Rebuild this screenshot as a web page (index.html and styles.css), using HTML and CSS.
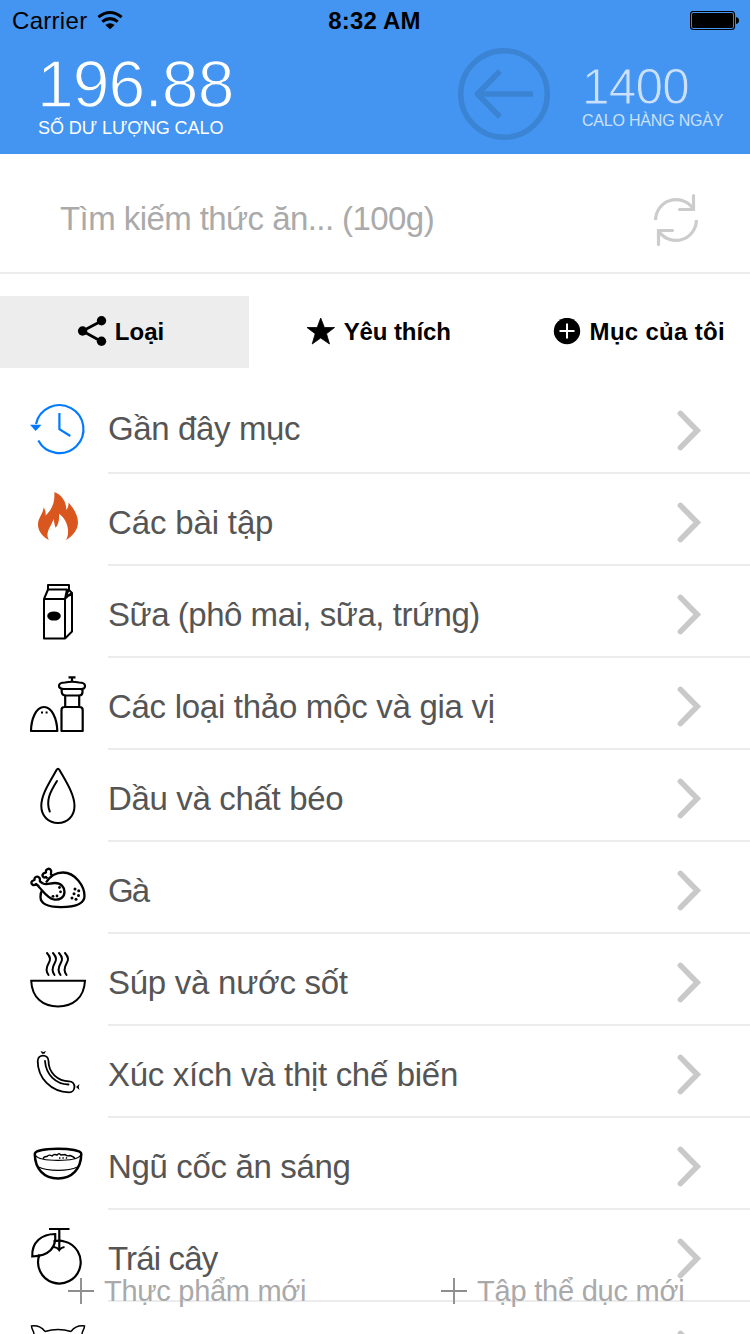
FILE: index.html
```
<!DOCTYPE html>
<html lang="vi">
<head>
<meta charset="utf-8">
<title>Calo</title>
<link rel="stylesheet" href="styles.css">
</head>
<body>
<svg class="defs" width="0" height="0"><defs><symbol id="chev" viewBox="0 0 30 46"><path d="M6.400 5.400L23.200 22.500L6.400 39.600" fill="none" stroke="#c9c9c9" stroke-width="5.600" stroke-linecap="round" stroke-linejoin="miter"/></symbol></defs></svg>
<div class="screen">
  <header class="header">
    <div class="status">
      <div class="carrier"><span class="carrier-name">Carrier</span>
        <svg class="wifi" width="26" height="20" viewBox="98 10 26 20"><g fill="none" stroke="#000" stroke-width="3"><path d="M99.400 17.200Q111 7.800 122.600 17.200"/><path d="M103.200 21.700Q111 15.500 118.800 21.700"/></g><path d="M106.300 25Q111 21.500 115.700 25L111 29.300Z"/></svg>
      </div>
      <span class="time">8:32 AM</span>
      <svg class="battery" width="50" height="20" viewBox="690 11 50 20"><rect x="690.500" y="11.500" width="44" height="18" rx="3" fill="none" stroke="#000" stroke-width="1.200"/><rect x="692" y="13" width="41" height="15" rx="1.500"/><path d="M736 17q3 .5 3 3.500t-3 3.500z"/></svg>
    </div>
    <div class="summary">
      <div class="balance"><div class="balance-num">196.88</div><div class="balance-label">SỐ DƯ LƯỢNG CALO</div></div>
      <svg class="back" width="94" height="94" viewBox="457 47 94 94" fill="none" stroke="#3b83d3"><circle cx="504" cy="94" r="43.300" stroke-width="5.400"/><path d="M533 94H478M500 71L477.500 94L500 117" stroke-width="5.600" stroke-linejoin="round"/></svg>
      <div class="daily"><div class="daily-num">1400</div><div class="daily-label">CALO HÀNG NGÀY</div></div>
    </div>
  </header>
  <div class="search">
    <span class="search-text">Tìm kiếm thức ăn... (100g)</span>
    <svg width="50" height="56" viewBox="651 192 50 56" fill="none" stroke="#ccc" stroke-width="3.200"><path d="M655.600 220A20.500 20.500 0 0 1 693 208.500M696.400 220A20.500 20.500 0 0 1 659 231.500"/><path d="M693.500 195.500V209.500H679.500M658.500 244.500V230.500H672.500" stroke-linecap="round"/></svg>
  </div>
  <nav class="tabs">
    <div class="tab tab-active"><svg width="30" height="32" viewBox="77 316 30 32"><path d="M101.500 321L82.500 331L101.500 341.500" fill="none" stroke="#000" stroke-width="2.800"/><circle cx="101.500" cy="320.700" r="4.700"/><circle cx="82.600" cy="331" r="4.700"/><circle cx="101.500" cy="341.300" r="4.700"/></svg><span class="t-cat">Loại</span></div>
    <div class="tab tab-fav"><svg width="30" height="30" viewBox="306 317 30 30"><path d="M320.700 318L324.400 327.500L334.600 327.500L326.500 333.700L329.500 344L320.700 338L312.200 344L315.200 333.700L307 327.500L317.200 327.500Z" stroke="#000" stroke-linejoin="round" stroke-width=".8"/></svg><span class="t-fav">Yêu thích</span></div>
    <div class="tab tab-own"><svg width="28" height="28" viewBox="552 318 28 28"><circle cx="566" cy="331" r="13.200"/><path d="M558.500 331H573.500M566 323.500V338.500" stroke="#fff" stroke-width="2"/></svg><span class="t-own">Mục của tôi</span></div>
  </nav>
  <main class="list">
    <div class="row first"><svg class="icon" viewBox="28 382 60 90"><g fill="none" stroke="#007aff" stroke-width="2.200"><path d="M36 424A24 24 0 1 1 38.300 440.500"/><path d="M59.400 413V429.200L70.300 436"/></g><path d="M30 424.800H41.500L35.700 431Z" fill="#007aff"/></svg><div class="cell"><span class="l1">Gần đây mục</span><svg class="chev"><use href="#chev"/></svg></div></div>
    <div class="row"><svg class="icon" viewBox="28 474 60 90"><path fill="#d9571f" d="M54.300 492C62 495 66.500 502 66.300 510C68 508 68.700 505.500 68.500 502.500C72.500 507 78 514.500 78 522.500C78 529.500 72.500 536.500 66 540C71 531 66.500 518.500 59 513.700C59.500 519 58.500 525.500 55.600 527.800C54.500 525 54.200 522 53.700 519C51 526.500 44.500 533 49 540C42.500 537 37.800 530.500 38 524C38.200 518 43.500 513 43.500 507.500C45 509 46 512 45.600 515.500C53 508.500 55 501 54.300 492Z"/></svg><div class="cell"><span class="l2">Các bài tập</span><svg class="chev"><use href="#chev"/></svg></div></div>
    <div class="row"><svg class="icon" viewBox="28 566 60 90" fill="none" stroke="#000" stroke-width="2" stroke-linejoin="round"><path d="M44 599H65V638.500H44ZM44 599L48 589.500H67L65 599M48 589.500V585H69V590L72 593V631.500L65 638.500M68.500 590L64.800 599L69.500 594.500L72 593M67 596L71.500 594.800"/><ellipse cx="54" cy="616" rx="5.800" ry="3.600" fill="#000"/></svg><div class="cell"><span class="l3">Sữa (phô mai, sữa, trứng)</span><svg class="chev"><use href="#chev"/></svg></div></div>
    <div class="row"><svg class="icon" viewBox="28 658 60 90" fill="none" stroke="#000" stroke-width="2.200" stroke-linejoin="round"><path d="M31 731H57.300C57 719 52 707 44 707S31.200 719 31 731ZM61.500 731V710Q61.500 707 64.500 707H79.500Q82.700 707 82.700 710V731ZM65.200 696V707M79.200 696V707M68.500 677.300H75.500M72 677.300V682"/><path d="M65 682.500Q72 681 79 682.500Q85 682.500 85 686T80 689H64Q59 689 59 685.800T65 682.500ZM61.700 689.500V692Q62 695.500 66 695.500H79Q82.500 695.500 82.500 692V689.500"/><path d="M41 712.500H43M45.600 712.500H47.600" stroke-width="1.800"/></svg><div class="cell"><span class="l4">Các loại thảo mộc và gia vị</span><svg class="chev"><use href="#chev"/></svg></div></div>
    <div class="row"><svg class="icon" viewBox="28 750 60 90" fill="none" stroke="#000" stroke-width="2" stroke-linecap="round"><path d="M56.500 770Q58 767.500 59.500 770C65 780 74.500 794 74.500 806C74.500 816 67.500 823 58 823S41.300 816 41.300 806C41.300 794 50 782 56.500 770Z"/><path d="M57 781C50 792 45.500 801 49.800 811.500"/></svg><div class="cell"><span class="l5">Dầu và chất béo</span><svg class="chev"><use href="#chev"/></svg></div></div>
    <div class="row"><svg class="icon" viewBox="28 842 60 90"><g fill="none" stroke="#000" stroke-width="2.300" stroke-linejoin="round"><path d="M46 882.500C50 876 56 872.500 63 872.500C75 872.500 84.500 886 84.500 896C84.500 904 76 907 61 907.200C47 907 40.500 904 40.500 897C40.500 893.500 40.800 892 42.300 890"/><path d="M43 883.500C47 885.500 50 883 55 883C61 883 64.500 887 64.500 892C64.500 897 60 900.500 54 899.500C47 898 44 892 38.500 886.500"/><path d="M39 886.500L36 884C34 886.500 31 884.500 31.500 882C32 880 34 880.500 34.500 880C34 876.500 38 875.500 39.500 878C40.500 879.500 39.500 880.500 40 881.500L43 883.500M47.500 878.500L46 877C44 878.500 41.500 876 43 874C44 872.500 45.500 873 46 872.500C45 869.500 49 867.500 50.800 870C52 871.500 50.500 873.500 51 874.500L53 876"/></g><g><circle cx="59.500" cy="887.500" r="1.400"/><circle cx="60.500" cy="891.800" r="1.400"/><circle cx="53" cy="896.300" r="1.400"/><circle cx="57" cy="896" r="1.400"/><circle cx="75" cy="889" r="1.500"/><circle cx="78.700" cy="890.800" r="1.500"/><circle cx="74" cy="893.800" r="1.500"/><circle cx="78.500" cy="895.500" r="1.500"/><circle cx="72" cy="898" r="1.500"/><circle cx="76" cy="899.200" r="1.500"/></g></svg><div class="cell"><span class="l6">Gà</span><svg class="chev"><use href="#chev"/></svg></div></div>
    <div class="row"><svg class="icon" viewBox="28 934 60 90" fill="none" stroke="#000" stroke-width="2"><path d="M31.200 980.700H85C84 998 73 1006.500 58 1006.500S32 998 31.200 980.700Z"/><path stroke-linecap="round" d="M47 953C51 957.500 50.500 960 48.500 963.500S45.500 971 48.500 975M53 953C57 957.500 56.500 960 54.500 963.500S51.500 971 54.500 975M59 953C63 957.500 62.500 960 60.500 963.500S57.500 971 60.500 975M65 953C69 957.500 68.500 960 66.500 963.500S63.500 971 66.500 975"/></svg><div class="cell"><span class="l7">Súp và nước sốt</span><svg class="chev"><use href="#chev"/></svg></div></div>
    <div class="row"><svg class="icon" viewBox="28 1026 60 90"><g fill="none" stroke="#000" stroke-width="1.800" stroke-linecap="round"><path d="M37.700 1061C37.700 1053.500 48.500 1054 48.500 1061C48.500 1073 58 1081 69 1081.300C76.500 1081.600 76 1092.300 69 1092.300C51 1092 37.700 1078 37.700 1061Z"/><path d="M45 1061C46 1075 56 1084 68.500 1084.500"/></g><path d="M40.500 1051L43.300 1052L46 1051L44.500 1053.700H42ZM79.500 1084L78.700 1087L79.500 1090L76 1087Z"/></svg><div class="cell"><span class="l8">Xúc xích và thịt chế biến</span><svg class="chev"><use href="#chev"/></svg></div></div>
    <div class="row"><svg class="icon" viewBox="28 1118 60 90" fill="none" stroke="#000"><path stroke-width="2.500" d="M34.800 1154C34.800 1147 81.300 1147 81.300 1154C81 1169 72 1178.500 58 1178.500S35 1169 34.800 1154Z"/><path stroke-width="1.300" d="M35.500 1155.500C40 1162 76 1162 80.500 1155.500M38.500 1167C48 1171.500 68 1171.500 77.500 1167"/><path stroke-width="1.400" d="M43 1159Q44 1156 47 1156.500Q49 1154 52 1156Q54 1153.500 57 1155Q59 1152.500 61 1155L65 1154.500Q67 1156.500 70 1155.500Q74 1156.500 75 1159"/><path stroke-width="1.400" stroke-dasharray="1.400 2" d="M59 1158H68"/></svg><div class="cell"><span class="l9">Ngũ cốc ăn sáng</span><svg class="chev"><use href="#chev"/></svg></div></div>
    <div class="row"><svg class="icon" viewBox="28 1210 60 90" fill="none" stroke="#000" stroke-width="2.200"><path d="M53.500 1241.500C57 1240.500 61 1240.500 64.500 1241.500A21.300 21.300 0 1 1 39.500 1254.500"/><path d="M55.200 1234C56.500 1248 49 1256 32.300 1256.500C31.500 1242 42 1234 55.200 1234ZM49 1229H69.500M59.300 1229V1249"/><path d="M54 1247Q57.500 1247.500 59.300 1250Q61 1247.500 64.500 1247"/></svg><div class="cell"><span class="l10">Trái cây</span><svg class="chev"><use href="#chev"/></svg></div></div>
    <div class="row"><svg class="icon" viewBox="28 1302 60 90" fill="none" stroke="#000" stroke-width="1.500"><path d="M34 1334C34 1331 31.500 1329.500 31.500 1326Q40 1325 45 1331.500M82 1334C82 1331 84.500 1329.500 84.500 1326Q76 1325 71 1331.500M45 1331.500Q58 1327.500 71 1331.500"/></svg><div class="cell"><span></span><svg class="chev"><use href="#chev"/></svg></div></div>
  </main>
  <footer class="actions">
    <div class="action"><svg width="28" height="28" viewBox="0 0 28 28"><path d="M1 14H27M14 1V27" stroke="#8e8e8e" stroke-width="1.900"/></svg><span class="a1">Thực phẩm mới</span></div>
    <div class="action"><svg width="28" height="28" viewBox="0 0 28 28"><path d="M1 14H27M14 1V27" stroke="#8e8e8e" stroke-width="1.900"/></svg><span class="a2">Tập thể dục mới</span></div>
  </footer>
</div>
</body>
</html>
```
FILE: styles.css
```
* { box-sizing: border-box; }
body { margin: 0; background: #fff; font-family: "Liberation Sans", Arial, sans-serif; overflow: hidden; }
svg { display: block; flex: none; }
.defs { position: absolute; }
.screen { position: relative; width: 750px; height: 1334px; overflow: hidden; }
span { white-space: nowrap; }
.header { height: 154px; background: #4495f1; display: flex; flex-direction: column; }
.status { height: 42px; display: grid; grid-template-columns: 1fr auto 1fr; padding: 0 10px 0 12px; }
.carrier { display: flex; font-size: 24px; line-height: 42px; gap: 10px; }
.carrier-name { letter-spacing: 0.3px; }
.wifi { margin-top: 10px; }
.time { font-size: 24px; font-weight: bold; line-height: 42px; letter-spacing: 0.2px; margin-right: 3px; }
.battery { justify-self: end; margin-top: 11px; }
.summary { display: flex; color: #fff; height: 112px; padding-left: 38px; }
.balance { width: 419px; }
/* A background-coloured stroke thins the digits to a light weight. */
.balance-num { font-size: 66px; line-height: 60px; padding-top: 12px; letter-spacing: -0.9px; -webkit-text-stroke: 1.300px #4495f1; margin-left: -1px; }
.balance-label { font-size: 18px; line-height: 22px; margin-top: 3px; letter-spacing: -0.05px; }
.back { margin-top: 5px; }
.daily { margin-left: 31px; }
.daily-num { font-size: 49.500px; line-height: 44px; padding-top: 23px; color: #cbe1fb; letter-spacing: -0.8px; -webkit-text-stroke: 1px #4495f1; }
.daily-label { font-size: 16px; line-height: 20px; margin-top: 2px; white-space: nowrap; letter-spacing: -0.2px; color: #cbe1fb; }
.search { height: 120px; border-bottom: 2px solid #ececec; display: flex; justify-content: space-between; padding: 38px 49px 0 60px; }
.search-text { font-size: 33px; line-height: 54px; color: #aaa; letter-spacing: -0.57px; }
.tabs { display: flex; height: 72px; margin-top: 22px; }
.tab { width: 250.500px; display: flex; align-items: center; justify-content: center; gap: 8px; font-size: 24px; font-weight: bold; }
.tab-active { width: 249px; background: #ededed; padding-right: 8px; }
.tab-fav { padding-left: 8px; letter-spacing: -0.1px; }
.tab-own { padding-left: 28px; letter-spacing: 0.3px; gap: 9px; }
.list { padding-top: 14px; }
.row { height: 92px; display: flex; padding-left: 28px; }
.icon { width: 60px; height: 90px; }
.cell { flex: 1; margin-left: 20px; border-bottom: 2px solid #ececec; display: flex; justify-content: space-between; padding-right: 46px; font-size: 33px; line-height: 98px; color: #555; }
.first .cell { line-height: 94px; }
.l1 { letter-spacing: -0.38px; }
.l2 { letter-spacing: -0.15px; }
.l3 { letter-spacing: -0.47px; }
.l4 { letter-spacing: -0.28px; }
.l5 { letter-spacing: -0.34px; }
.l6 { letter-spacing: -1.800px; }
.l7 { letter-spacing: -0.26px; }
.l8 { letter-spacing: -0.31px; }
.l9 { letter-spacing: -0.35px; }
.l10 { letter-spacing: -0.85px; }
.a1 { letter-spacing: -0.3px; }
.a2 { letter-spacing: -0.22px; }
.chev { width: 30px; height: 46px; margin-top: 26px; }
.actions { position: absolute; left: 0; top: 1274px; width: 750px; display: flex; }
.action { width: 373px; padding-left: 67px; display: flex; align-items: center; gap: 9px; font-size: 29px; line-height: 34px; color: #a9a9a9; text-shadow: 0 0 20px rgba(0,0,0,.03); }
```
